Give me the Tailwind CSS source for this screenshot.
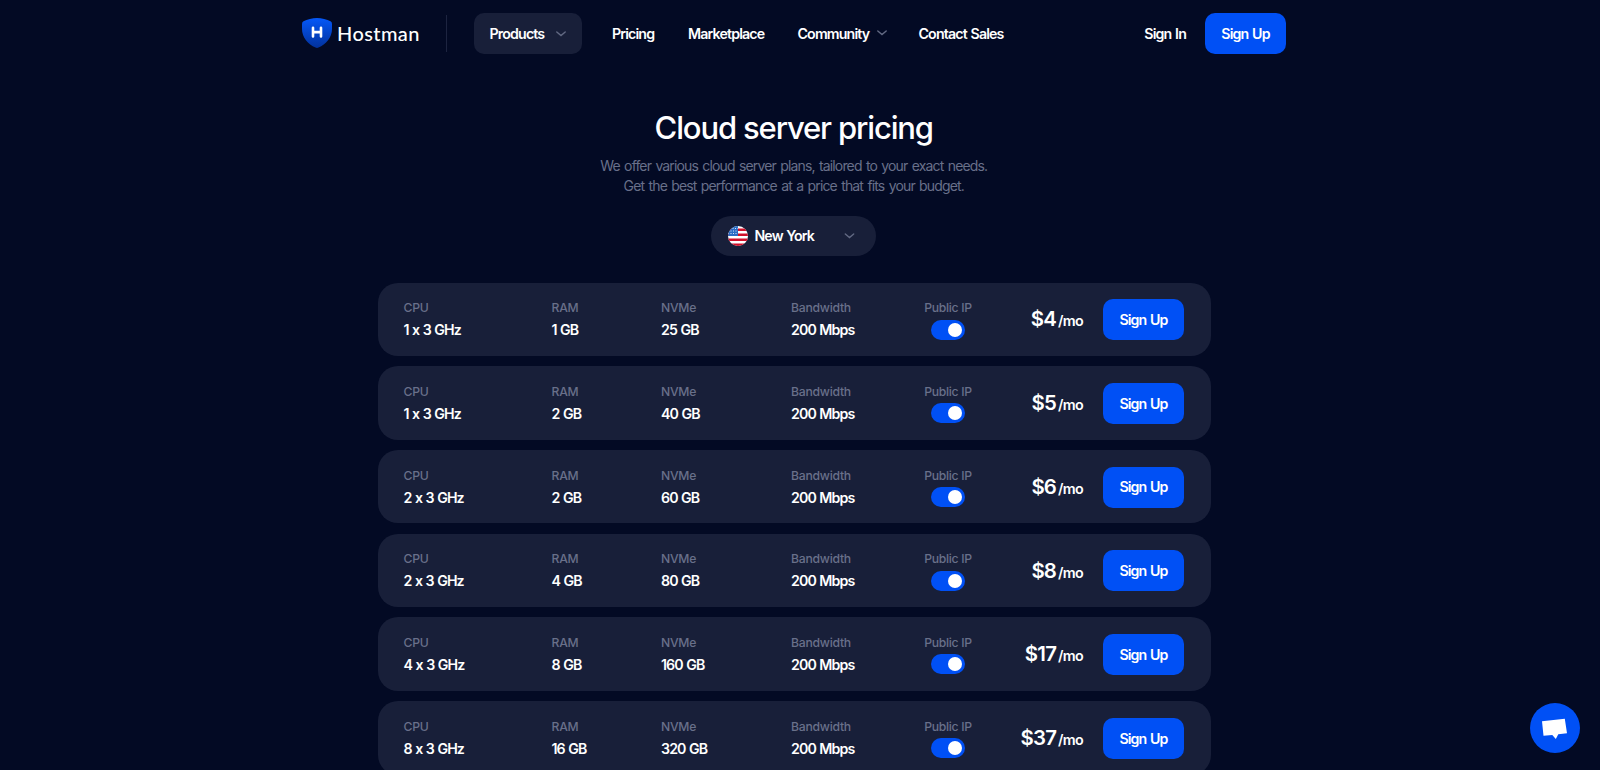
<!DOCTYPE html>
<html lang="en">

<head>
    <meta charset="UTF-8">
    <meta name="viewport" content="width=device-width, initial-scale=1.0">
    <title>Hostman - Cloud server pricing</title>
    <script src="https://cdn.jsdelivr.net/npm/@tailwindcss/browser@4"></script>
</head>

<body class="bg-[#030a24] text-white font-['Inter',sans-serif] h-screen overflow-hidden">
    <header class="flex items-center h-[67px] pl-[302px] pr-[314px] text-[14.2px] font-semibold tracking-[-0.85px] [word-spacing:1px]">
        <a href="#" class="flex items-center w-[145px] h-[37px] border-r border-[#1d2440]">
            <svg class="w-[30px] h-[30px] shrink-0 mb-px" viewBox="0 0 30 30">
                <defs>
                    <linearGradient id="shield" x1="0" y1="0" x2="0" y2="1">
                        <stop offset="0" stop-color="#0558f8" />
                        <stop offset="1" stop-color="#02329c" />
                    </linearGradient>
                </defs>
                <path d="M15 0C19.5 0 25 1.300 28.500 3.200Q30 4 30 6V11C30 19.500 24 26.500 16.500 29.600Q15 30.200 13.500 29.600C6 26.500 0 19.500 0 11V6Q0 4 1.500 3.200C5 1.300 10.500 0 15 0Z" fill="url(#shield)" />
                <path d="M11 9.700V18.500M19 9.700V18.500M11 14.100H19" stroke="#fff" stroke-width="2.600" stroke-linecap="round" fill="none" />
            </svg>
            <span class="ml-[5px] mb-[2px] font-['Lato',sans-serif] text-[20px] font-medium tracking-[0.4px]">Hostman</span>
        </a>
        <nav class="flex items-center flex-1">
            <a href="#" class="flex items-center justify-between ml-[26.500px] w-[108.500px] h-[41px] px-4 rounded-[10px] bg-[#181f39]">
                Products
                <svg class="w-[10px] h-[6px]" viewBox="0 0 10 6" fill="none" stroke="#626983" stroke-width="1.400" stroke-linecap="round"><path d="M.8 1L5 4.600L9.200 1" /></svg>
            </a>
            <a href="#" class="ml-[30px] w-[76px]">Pricing</a>
            <a href="#" class="w-[109.500px]">Marketplace</a>
            <a href="#" class="flex items-center w-[121px]">
                <span class="w-[79.500px]">Community</span>
                <svg class="w-[10px] h-[6px]" viewBox="0 0 10 6" fill="none" stroke="#626983" stroke-width="1.400" stroke-linecap="round"><path d="M.8 1L5 4.600L9.200 1" /></svg>
            </a>
            <a href="#">Contact Sales</a>
        </nav>
        <a href="#" class="mr-[19px]">Sign In</a>
        <a href="#" class="flex items-center justify-center w-[81px] h-[41px] rounded-[10px] bg-[#0050f5]">Sign Up</a>
    </header>

    <main class="flex flex-col items-center w-[833.500px] ml-[377.500px] pt-[41px]">
        <h1 class="mr-px text-[31px] leading-[40px] font-medium tracking-[-1.150px]">Cloud server pricing</h1>
        <p class="mt-[7.500px] mr-px text-center text-[14px] leading-[20.300px] tracking-[-0.850px] [word-spacing:1.2px] text-[#69708a]">We offer various cloud server plans, tailored to your exact needs.<br>Get the best performance at a price that fits your budget.</p>
        <button class="flex items-center mt-[19.500px] mr-[1.500px] w-[165px] h-[40px] pl-[17px] pr-[21px] rounded-full bg-[#181f39]">
            <svg class="w-[20px] h-[20px]" viewBox="0 0 20 20">
                <clipPath id="round"><circle cx="10" cy="10" r="10" /></clipPath>
                <g clip-path="url(#round)">
                    <path d="M0 0H20V20H0Z" fill="#fff" />
                    <path d="M0 2.600H20V5.100H0ZM0 7.600H20V10.100H0ZM0 12.600H20V15.100H0ZM0 17.500H20V20H0Z" fill="#d0102a" />
                    <path d="M0 0H10V10.100H0Z" fill="#2a6cc4" />
                    <path d="M2 2.500H10M0 5H10M0 7.500H10" stroke="#d5e4f7" stroke-width="1" stroke-dasharray="1 1.500" />
                </g>
            </svg>
            <span class="ml-[6.500px] text-[14.200px] font-semibold tracking-[-0.9px] [word-spacing:0.8px]">New York</span>
            <svg class="ml-auto w-[11px] h-[6px]" viewBox="0 0 10 6" fill="none" stroke="#626983" stroke-width="1.400" stroke-linecap="round"><path d="M.8 1L5 4.600L9.200 1" /></svg>
        </button>
        <div id="planList" class="flex flex-col gap-[10.200px] w-full mt-[27px]"></div>
    </main>

    <button class="fixed right-[20px] bottom-[17px] w-[50px] h-[50px] rounded-full bg-[#0050f5]">
        <svg class="w-[50px] h-[50px]" viewBox="0 0 50 50"><path d="M12 18.300L34.800 15.800L37 30.300L28.300 31.300L25.800 36L22.300 32L13.500 32.800Z" fill="#fff" /></svg>
    </button>

    <script>
        const plans = [
            { cpu: 1, ram: 1, nvme: 25, price: 4 },
            { cpu: 1, ram: 2, nvme: 40, price: 5 },
            { cpu: 2, ram: 2, nvme: 60, price: 6 },
            { cpu: 2, ram: 4, nvme: 80, price: 8 },
            { cpu: 4, ram: 8, nvme: 160, price: 17 },
            { cpu: 8, ram: 16, nvme: 320, price: 37 },
        ];
        const planList = document.getElementById("planList");

        function renderSpec(label, value) {
            return `
          <div>
            <div class="text-[12.200px] leading-[17px] font-medium tracking-[-0.25px] text-[#69708a]">${label}</div>
            <div class="mt-[4px] text-[14.200px] leading-[20px] font-semibold tracking-[-0.9px] [word-spacing:0.8px]">${value}</div>
          </div>
        `;
        }

        plans.forEach((plan) => {
            const row = document.createElement("div");
            row.className = "flex items-center h-[73.500px] shrink-0 pl-[26px] pr-[27px] pt-[0.800px] rounded-[20px] bg-[#181f39]";
            row.innerHTML = `
          <div class="grid grid-cols-[148px_109.500px_130px_133px_48px]">
            ${renderSpec("CPU", `${plan.cpu} x 3 GHz`)}
            ${renderSpec("RAM", `${plan.ram} GB`)}
            ${renderSpec("NVMe", `${plan.nvme} GB`)}
            ${renderSpec("Bandwidth", "200 Mbps")}
            <div class="flex flex-col items-center">
              <div class="text-[12.200px] leading-[17px] font-medium tracking-[-0.3px] text-[#69708a] whitespace-nowrap">Public IP</div>
              <div class="flex items-center justify-end mt-[3.500px] mr-px w-[34px] h-[20px] pr-[3px] rounded-full bg-[#0050f5]">
                <div class="w-[14px] h-[14px] rounded-full bg-white"></div>
              </div>
            </div>
          </div>
          <div class="flex items-baseline ml-auto mr-[20px] font-semibold">
            <span class="text-[20.400px] tracking-[-0.8px]">$${plan.price}</span>
            <span class="ml-[2px] text-[14.300px] tracking-[-0.7px]">/mo</span>
          </div>
          <button class="w-[81px] h-[41px] rounded-[10px] bg-[#0050f5] text-[14.200px] font-semibold tracking-[-0.880px] [word-spacing:1px]">Sign Up</button>
        `;
            planList.appendChild(row);
        });
    </script>
</body>

</html>
